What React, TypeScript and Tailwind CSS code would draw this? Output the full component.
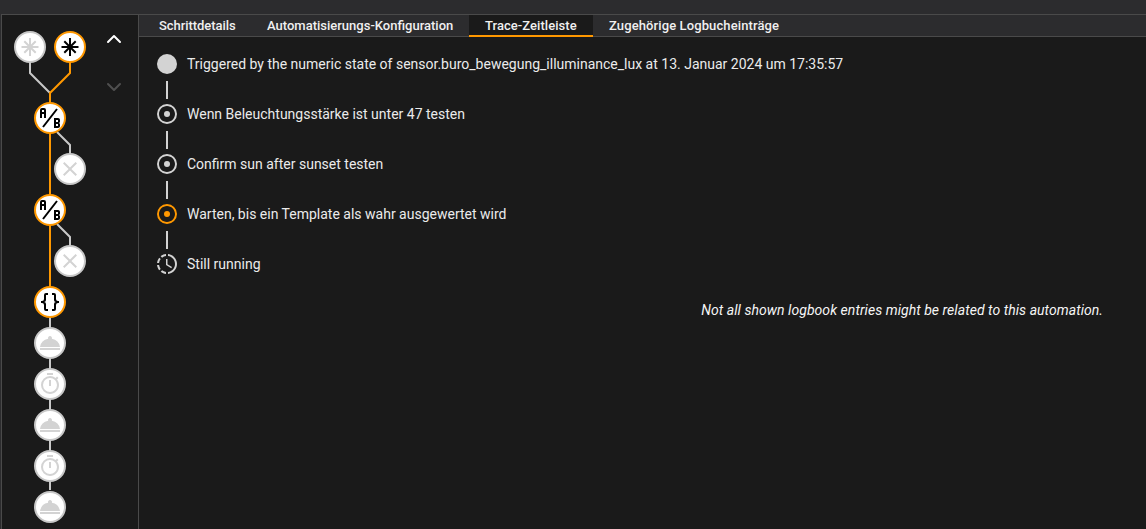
import { ChevronDown, ChevronUp } from "lucide-react";

const GRAY = "#c8c8c8";
const ORANGE = "#ff9800";
const ICON_GRAY = "#d3d3d3";

const icons = {
  ab: "M4 2A2 2 0 0 0 2 4V12H4V8H6V12H8V4A2 2 0 0 0 6 2H4M4 4H6V6H4M22 15.5V14C22 12.9 21.1 12 20 12H16V22H20C21.1 22 22 21.1 22 20V18.5C22 17.7 21.3 17 20.5 17C21.3 17 22 16.3 22 15.5M20 20H18V18H20V20M20 16H18V14H20V16M5.79 21.61L4.21 20.39L18.21 2.39L19.79 3.61L5.79 21.61Z",
  close:
    "M19,6.41L17.59,5L12,10.59L6.41,5L5,6.41L10.59,12L5,17.59L6.41,19L12,13.41L17.59,19L19,17.59L13.41,12L19,6.41Z",
  braces:
    "M8,3A2,2 0 0,0 6,5V9A2,2 0 0,1 4,11H3V13H4A2,2 0 0,1 6,15V19A2,2 0 0,0 8,21H10V19H8V14A2,2 0 0,0 6,12A2,2 0 0,0 8,10V5H10V3M16,3A2,2 0 0,1 18,5V9A2,2 0 0,0 20,11H21V13H20A2,2 0 0,0 18,15V19A2,2 0 0,1 16,21H14V19H16V14A2,2 0 0,1 18,12A2,2 0 0,1 16,10V5H14V3H16Z",
  service: "M2 17H22V19H2V17M13.84 7.79A2 2 0 1 0 10.16 7.79 10 10 0 0 0 2 16H22A10 10 0 0 0 13.84 7.79Z",
  timer:
    "M12,20A7,7 0 0,1 5,13A7,7 0 0,1 12,6A7,7 0 0,1 19,13A7,7 0 0,1 12,20M19.03,7.39L20.45,5.97C20,5.46 19.55,5 19.04,4.56L17.62,6C16.07,4.74 14.12,4 12,4A9,9 0 0,0 3,13A9,9 0 0,0 12,22C17,22 21,17.97 21,13C21,10.88 20.26,8.93 19.03,7.39M11,14H13V8H11M15,1H9V3H15V1Z",
  asterisk:
    "M11 3H13V21H11ZM3.5 11H20.5V13H3.5ZM5.6 7L7 5.6L18.4 17L17 18.4ZM17 5.6L18.4 7L7 18.4L5.6 17Z",
  clock:
    "M13,2.03V2.05L13,4.05C17.39,4.59 20.5,8.58 19.96,12.97C19.5,16.61 16.64,19.5 13,19.93V21.93C18.5,21.38 22.5,16.5 21.95,11C21.5,6.25 17.73,2.5 13,2.03M11,2.06C9.05,2.25 7.19,3 5.67,4.26L7.1,5.74C8.22,4.84 9.57,4.26 11,4.06V2.06M4.26,5.67C3,7.19 2.25,9.04 2.05,11H4.05C4.24,9.58 4.8,8.23 5.69,7.1L4.26,5.67M2.06,13C2.26,14.96 3.03,16.81 4.27,18.33L5.69,16.9C4.81,15.77 4.24,14.42 4.06,13H2.06M7.1,18.37L5.67,19.74C7.18,21 9.04,21.79 11,22V20C9.58,19.82 8.23,19.25 7.1,18.37M12.5,7V12.25L17,14.92L16.25,16.15L11,13V7H12.5Z",
  record:
    "M12,20C7.59,20 4,16.41 4,12C4,7.59 7.59,4 12,4C16.41,4 20,7.59 20,12C20,16.41 16.41,20 12,20M12,2A10,10 0 0,0 2,12A10,10 0 0,0 12,22A10,10 0 0,0 22,12A10,10 0 0,0 12,2Z",
  dot: "M12,2A10,10 0 0,0 2,12A10,10 0 0,0 12,22A10,10 0 0,0 22,12A10,10 0 0,0 12,2Z",
};

const nodes = [
  { x: 30, y: 47, icon: icons.asterisk, active: false },
  { x: 70, y: 47, icon: icons.asterisk, active: true },
  { x: 50, y: 118, icon: icons.ab, active: true },
  { x: 70, y: 169, icon: icons.close, active: false },
  { x: 50, y: 210, icon: icons.ab, active: true },
  { x: 70, y: 261, icon: icons.close, active: false },
  { x: 50, y: 302, icon: icons.braces, active: true },
  { x: 50, y: 343, icon: icons.service, active: false },
  { x: 50, y: 384, icon: icons.timer, active: false },
  { x: 50, y: 425, icon: icons.service, active: false },
  { x: 50, y: 466, icon: icons.timer, active: false },
  { x: 50, y: 507, icon: icons.service, active: false },
];

function Graph() {
  return (
    <svg width="100" height="514" viewBox="0 15 100 514" className="shrink-0">
      <g fill="none" strokeWidth="2">
        <path d="M30 62V73L50 93" stroke={GRAY} />
        <path d="M57 132L70 145V154" stroke={GRAY} />
        <path d="M57 224L70 237V246" stroke={GRAY} />
        <path d="M50 317V490" stroke={GRAY} />
        <path d="M70 62V73L50 93V103M50 133V195M50 225V287" stroke={ORANGE} />
      </g>
      {nodes.map((n, i) => (
        <g key={i}>
          <circle cx={n.x} cy={n.y} r="15" fill="#fff" stroke={n.active ? ORANGE : GRAY} strokeWidth="2" />
          <svg x={n.x - 12} y={n.y - 12} width="24" height="24" viewBox="0 0 24 24">
            <path d={n.icon} fill={n.active ? "#000" : ICON_GRAY} />
          </svg>
        </g>
      ))}
    </svg>
  );
}

const steps = [
  { icon: icons.dot, color: ICON_GRAY, text: "Triggered by the numeric state of sensor.buro_bewegung_illuminance_lux at 13. Januar 2024 um 17:35:57" },
  { icon: icons.record, color: ICON_GRAY, text: "Wenn Beleuchtungsstärke ist unter 47 testen", small: true },
  { icon: icons.record, color: ICON_GRAY, text: "Confirm sun after sunset testen", small: true },
  { icon: icons.record, color: ORANGE, text: "Warten, bis ein Template als wahr ausgewertet wird", small: true },
  { icon: icons.clock, color: ICON_GRAY, text: "Still running" },
];

export default function App() {
  return (
    <div className="h-[529px] w-[1146px] overflow-hidden bg-[#2c2c2e] text-[14px] text-[#ebebeb] font-['Roboto',sans-serif] flex flex-col">
      <div className="h-[15px] shrink-0 border-b border-[#4a4a4a] ml-[1px]" />
      <div className="flex flex-1 min-h-0 ml-[1px] border-l border-[#4a4a4a]">
        {/* Trace graph */}
        <div className="w-[137px] shrink-0 bg-[#1a1a1a] border-r border-[#4a4a4a] flex">
          <div className="-ml-[2px]">
            <Graph />
          </div>
          <div className="flex flex-col items-center ml-[2px] pt-[12px] gap-[24px]">
            <button className="w-[24px] h-[24px] flex items-center justify-center text-white">
              <ChevronUp size={24} strokeWidth={2} />
            </button>
            <button className="w-[24px] h-[24px] flex items-center justify-center text-[#4f4f4f]">
              <ChevronDown size={24} strokeWidth={2} />
            </button>
          </div>
        </div>

        <div className="flex-1 min-w-0 flex flex-col bg-[#1a1a1a]">
          <div className="h-[22px] shrink-0 bg-[#2c2c2e] border-b border-[#4a4a4a] flex pl-[4px] text-[13px] font-medium leading-[21px] text-[#f0f0f0]">
            <div className="w-[108px] h-[21px] pl-[16px] tracking-[-0.05px]">Schrittdetails</div>
            <div className="w-[218px] h-[21px] pl-[16px]">Automatisierungs-Konfiguration</div>
            <div className="w-[124px] h-[22px] pl-[16px] bg-[#1a1a1a] border-b-2 border-[#ff9800] tracking-[0.05px]">Trace-Zeitleiste</div>
            <div className="h-[21px] pl-[16px] tracking-[0.11px]">Zugehörige Logbucheinträge</div>
          </div>

          {/* Timeline */}
          <div className="pt-[15px] pl-[16px] pr-[43px] flex flex-col">
            {steps.map((s, i) => (
              <div key={i}>
                {i > 0 && <div className="ml-[11px] mt-[5px] mb-[3px] h-[18px] w-[2px] bg-[#d3d3d3]" />}
                <div className="flex items-center h-[24px] gap-[8px]">
                  <svg width="24" height="24" viewBox="0 0 24 24" className="shrink-0">
                    <path d={s.icon} fill={s.color} fillRule="evenodd" />
                    {s.small && <circle cx="12" cy="12" r="3" fill={s.color} />}
                  </svg>
                  <span>{s.text}</span>
                </div>
              </div>
            ))}
            <p className="mt-[24px] text-right italic leading-[20px] tracking-[0.05px] text-[#f5f5f5]">
              Not all shown logbook entries might be related to this automation.
            </p>
          </div>
        </div>
      </div>
    </div>
  );
}
